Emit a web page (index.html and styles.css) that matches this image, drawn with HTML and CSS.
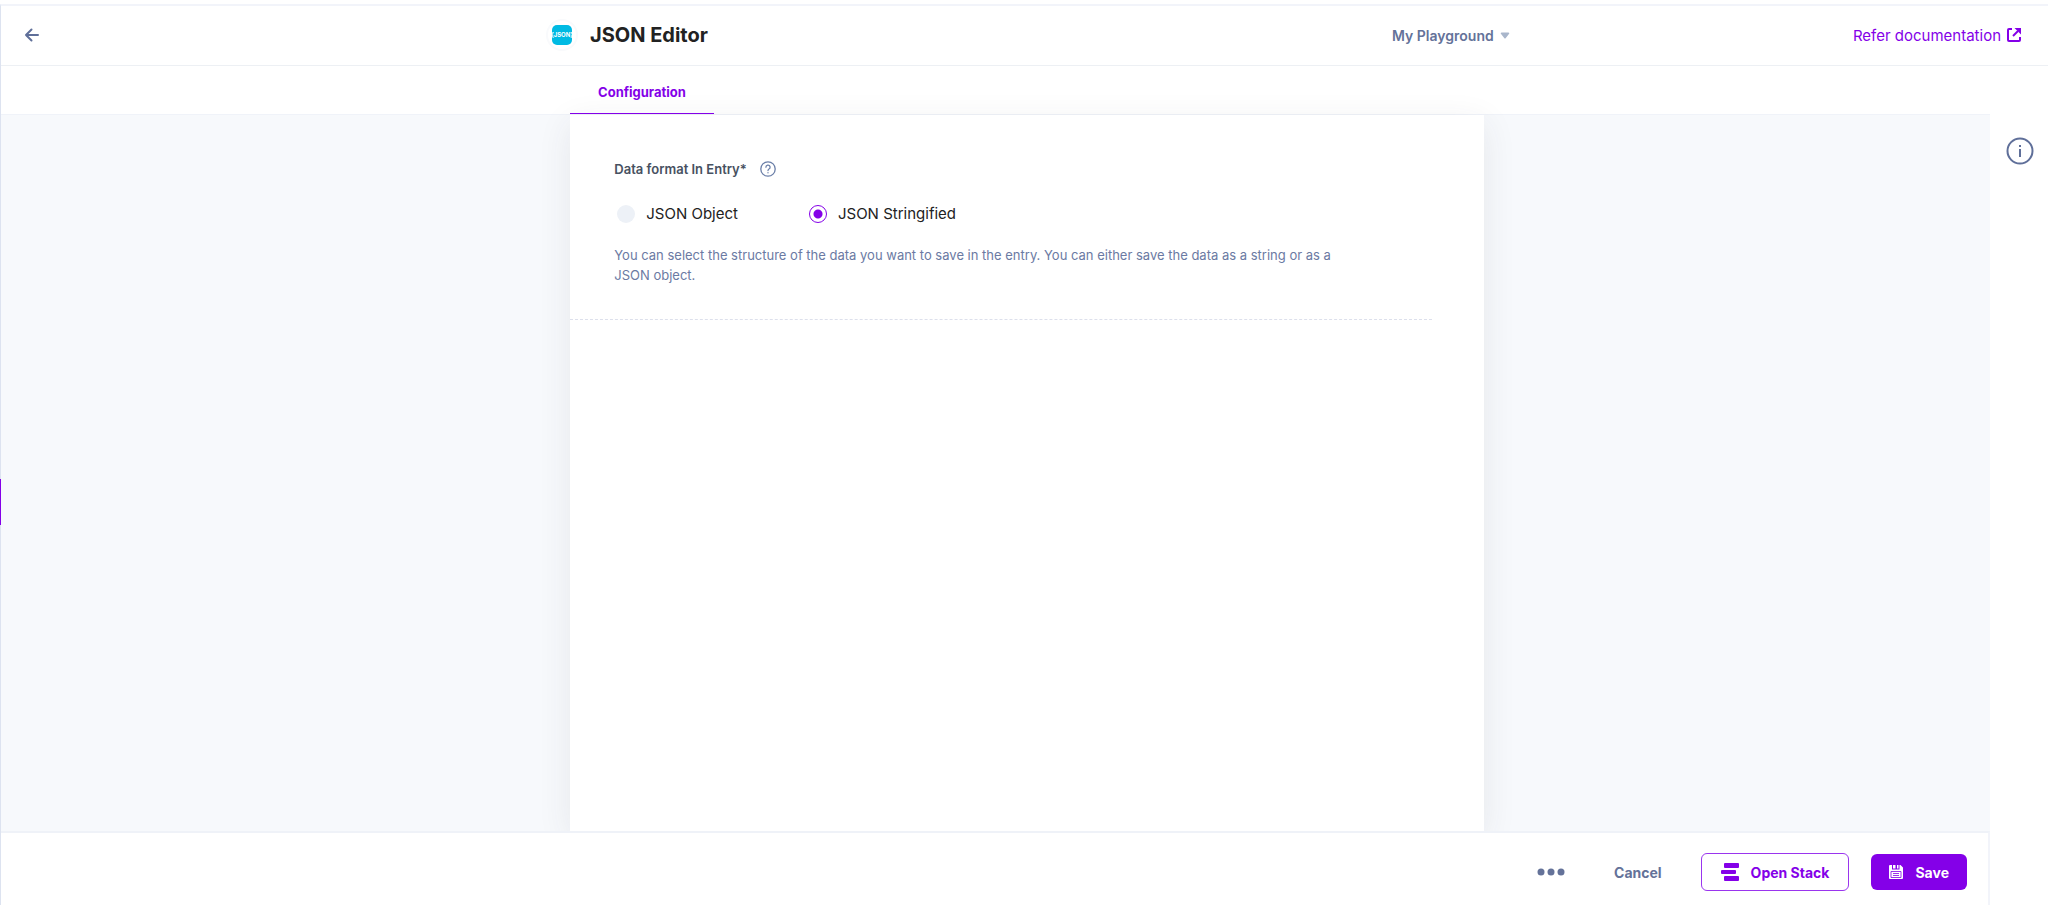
FILE: index.html
```html
<!DOCTYPE html>
<html lang="en">
<head>
    <meta charset="UTF-8">
    <meta name="viewport" content="width=device-width, initial-scale=1.0">
    <title>JSON Editor</title>
    <link rel="stylesheet" href="styles.css">
</head>
<body>
    <div class="app">
        <header class="header">
            <button class="back" type="button" aria-label="Back">
                <svg width="16" height="14" viewBox="0 0 16 14" fill="none" stroke="currentColor" stroke-width="2" stroke-linecap="round" stroke-linejoin="round">
                    <path d="M14 7H2M7.500 1.500L2 7l5.500 5.500"/>
                </svg>
            </button>
            <div class="title">
                <span class="logo">
                    <svg width="20" height="20" viewBox="0 0 20 20">
                        <rect width="20" height="20" rx="5" fill="#00bae3"/>
                        <text x="10" y="12" text-anchor="middle" class="logo-text">{JSON}</text>
                    </svg>
                </span>
                <h1>JSON Editor</h1>
            </div>
            <button class="stack-menu" type="button">
                My Playground
                <svg width="10" height="7" viewBox="0 0 10 7"><path d="M1.500.5h7a.8.8 0 0 1 .6 1.300L5.600 6.200a.8.8 0 0 1-1.200 0L.9 1.800A.8.8 0 0 1 1.500.5z" fill="#a9b6cb"/></svg>
            </button>
            <a class="docs" href="#">
                Refer documentation
                <svg width="14" height="14" viewBox="0 0 14 14" fill="none" stroke="currentColor" stroke-width="2">
                    <path d="M5 1H2a1 1 0 0 0-1 1v10a1 1 0 0 0 1 1h10a1 1 0 0 0 1-1V9"/>
                    <path d="M6 8l5-5"/>
                    <path d="M7.500 0H14v6.500z" fill="currentColor" stroke="none"/>
                </svg>
            </a>
        </header>

        <nav class="tabs">
            <a class="tab" href="#">Configuration</a>
        </nav>

        <div class="content">
            <div class="main">
                <main class="canvas">
                    <form class="panel">
                        <fieldset class="field">
                            <legend>
                                Data format In Entry*
                                <svg width="16" height="16" viewBox="0 0 16 16" fill="none" stroke="#6b7fa8" stroke-width="1.300" stroke-linecap="round">
                                    <circle cx="8" cy="8" r="7.200"/>
                                    <path d="M5.900 6.200a2.100 2.100 0 1 1 3.100 1.800c-.7.400-1 .8-1 1.500M8 11.700v.1"/>
                                </svg>
                            </legend>
                            <div class="options">
                                <label class="option"><input type="radio" name="format" value="object">JSON Object</label>
                                <label class="option"><input type="radio" name="format" value="string" checked>JSON Stringified</label>
                            </div>
                            <p class="help">You can select the structure of the data you want to save in the entry. You can either save the data as a string or as a JSON object.</p>
                        </fieldset>
                    </form>
                </main>
                <footer class="footer">
                    <button class="more" type="button" aria-label="More actions">
                        <svg width="28" height="8" viewBox="0 0 28 8" fill="currentColor">
                            <circle cx="4" cy="4" r="3.500"/><circle cx="14" cy="4" r="3.500"/><circle cx="24" cy="4" r="3.500"/>
                        </svg>
                    </button>
                    <button class="btn cancel" type="button">Cancel</button>
                    <button class="btn open" type="button">
                        <svg width="18" height="18" viewBox="0 0 18 18" fill="currentColor">
                            <rect x="3" width="15" height="5" rx="1"/><rect y="7" width="15" height="4" rx="1"/><rect x="3" y="13" width="15" height="5" rx="1"/>
                        </svg>
                        Open Stack
                    </button>
                    <button class="btn save" type="button">
                        <svg width="14" height="14" viewBox="0 0 14 14">
                            <path fill="#fff" d="M1 0h2v4.500h7.500V0h1L14 2.500V13a1 1 0 0 1-1 1H1a1 1 0 0 1-1-1V1a1 1 0 0 1 1-1z"/>
                            <path fill="#fff" d="M4 0h2.500v3.500H4zM8 0h1.500v3.500H8z"/>
                            <path d="M2 6.500h10v6H2zM4 8.500h6M4 10.500h6" fill="none" stroke="#8400e8" stroke-width=".8"/>
                        </svg>
                        Save
                    </button>
                </footer>
            </div>
            <aside class="rail">
                <button class="info" type="button" aria-label="Information">
                    <svg width="28" height="28" viewBox="0 0 28 28" fill="none" stroke="currentColor" stroke-width="2">
                        <circle cx="14" cy="14" r="12.500"/>
                        <path d="M14 12v8M14 8v2"/>
                    </svg>
                </button>
            </aside>
        </div>
        <span class="nav-marker"></span>
    </div>
</body>
</html>
```
FILE: styles.css
```css
* {
    box-sizing: border-box;
}

body {
    margin: 0;
    padding-top: 4px;
    font-family: Inter, sans-serif;
    font-size: 15px;
    color: #222;
    background: #fff;
}

button {
    font: inherit;
    padding: 0;
    border: none;
    background: none;
    color: #647299;
    cursor: pointer;
}

svg {
    display: block;
    flex: none;
}

.app {
    position: relative;
    display: flex;
    flex-direction: column;
    min-height: calc(100vh - 4px);
    border-top: 2px solid #f2f4fa;
    border-left: 1px solid #dde3f0;
}

.header {
    display: grid;
    grid-template-columns: 545fr 846fr 330fr 326fr;
    align-items: center;
    height: 60px;
    padding-bottom: 1px;
    border-bottom: 1px solid #edf0f4;
}

.back {
    justify-self: start;
    margin-left: 23px;
    color: #5f6f99;
}

.title {
    display: flex;
    align-items: center;
    gap: 12px;
}

.logo {
    display: flex;
    align-items: center;
    justify-content: center;
    width: 32px;
    height: 32px;
    border: 2px solid #f9fafc;
    border-radius: 50%;
}

.logo-text {
    font-size: 6px;
    font-weight: 700;
    fill: #fff;
}

h1 {
    margin: 0;
    font-size: 20px;
    line-height: 28px;
    font-weight: 700;
}

.stack-menu {
    justify-self: start;
    display: flex;
    align-items: center;
    gap: 6px;
    font-size: 14px;
    font-weight: 600;
}

.docs {
    justify-self: end;
    display: flex;
    align-items: center;
    gap: 6px;
    margin-right: 27px;
    color: #8400e8;
    text-decoration: none;
    white-space: nowrap;
}

.tabs {
    display: flex;
    height: 48px;
    padding-left: 27.8%;
}

.tab {
    position: relative;
    z-index: 1;
    padding: 4px 28px 0;
    border-bottom: 1px solid #8400e8;
    color: #8400e8;
    font-size: 13px;
    line-height: 44px;
    font-weight: 700;
    text-decoration: none;
}

.content {
    flex: 1;
    display: flex;
}

.main {
    flex: 1;
    display: flex;
    flex-direction: column;
}

.canvas {
    flex: 1;
    display: grid;
    grid-template-columns: 569fr 913fr 506fr;
    border-top: 1px solid #f0f3f9;
    background: #f7f9fc;
}

.panel {
    grid-column: 2;
    padding-top: 44px;
    background: #fff;
    box-shadow: 0 8px 32px rgba(50, 50, 70, 0.09);
}

.field {
    margin: 0 52px 0 0;
    padding: 0 0 34px 44px;
    border: none;
    border-bottom: 1px dashed #dde0ec;
}

legend {
    display: flex;
    align-items: center;
    gap: 13px;
    padding: 0;
    color: #475161;
    font-size: 13px;
    line-height: 20px;
    font-weight: 600;
}

.options {
    display: flex;
    gap: 68px;
    margin-top: 23px;
}

.option {
    display: flex;
    align-items: center;
    gap: 11px;
    padding-left: 3px;
    line-height: 24px;
}

.option input {
    appearance: none;
    width: 18px;
    height: 18px;
    margin: 0;
    border-radius: 50%;
    background: #edf1f7;
}

.option input:checked {
    border: 1px solid #8400e8;
    background: radial-gradient(circle, #8400e8 4px, #fff 5px);
}

.help {
    max-width: 740px;
    margin: 19px 0 0;
    color: #6b7aa3;
    font-size: 13px;
    line-height: 20px;
}

.footer {
    position: relative;
    display: flex;
    align-items: center;
    justify-content: flex-end;
    height: 74px;
    padding: 6px 21px 0 0;
    border-top: 2px solid #eff2f8;
    border-right: 2px solid #f2f4fa;
    background: #fff;
}

.more {
    margin-right: 49px;
}

.btn {
    display: flex;
    align-items: center;
    gap: 12px;
    font-size: 14px;
    font-weight: 700;
}

.cancel {
    margin-right: 39px;
}

.open {
    height: 38px;
    margin-right: 22px;
    padding: 0 19px;
    border: 1px solid #9a35ee;
    border-radius: 6px;
    color: #8400e8;
}

.save {
    height: 36px;
    padding: 0 18px;
    border-radius: 6px;
    background: #8400e8;
    color: #fff;
}

.rail {
    display: flex;
    justify-content: center;
    align-items: flex-start;
    width: 58px;
    padding: 23px 0 0 2px;
}

.info {
    color: #5f6f99;
}

/* active item of the collapsed side navigation */
.nav-marker {
    position: absolute;
    top: calc(50% + 23px);
    left: -1px;
    width: 1px;
    height: 46px;
    background: #8400e8;
}
```
